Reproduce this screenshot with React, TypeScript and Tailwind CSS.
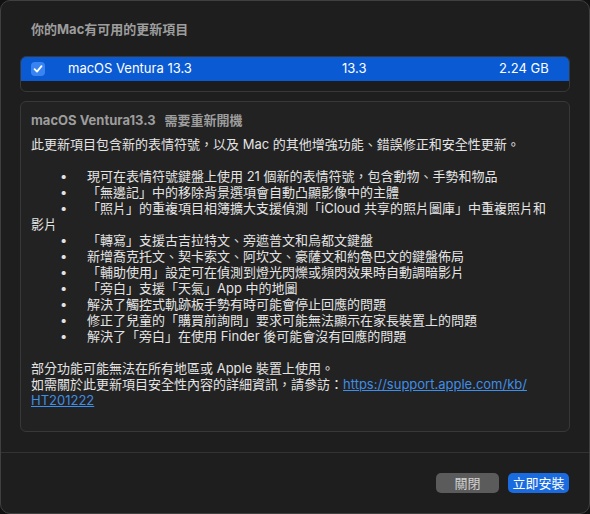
import React from "react";

const bullets: string[] = [
  "現可在表情符號鍵盤上使用 21 個新的表情符號，包含動物、手勢和物品",
  "「無邊記」中的移除背景選項會自動凸顯影像中的主體",
  "「照片」的重複項目相簿擴大支援偵測「iCloud 共享的照片圖庫」中重複照片和",
  "「轉寫」支援古吉拉特文、旁遮普文和烏都文鍵盤",
  "新增喬克托文、契卡索文、阿坎文、豪薩文和約魯巴文的鍵盤佈局",
  "「輔助使用」設定可在偵測到燈光閃爍或頻閃效果時自動調暗影片",
  "「旁白」支援「天氣」App 中的地圖",
  "解決了觸控式軌跡板手勢有時可能會停止回應的問題",
  "修正了兒童的「購買前詢問」要求可能無法顯示在家長裝置上的問題",
  "解決了「旁白」在使用 Finder 後可能會沒有回應的問題",
];

function Bullet({ text }: { text: string }) {
  return (
    <div className="flex h-[16px] whitespace-nowrap">
      <span className="w-[56px] shrink-0 pl-[29px]">•</span>
      <span>{text}</span>
    </div>
  );
}

export default function App() {
  return (
    <div className="w-[590px] h-[514px] bg-[#111111]">
      <div
        className="w-[590px] h-[514px] bg-[#1e1e1e] rounded-[10px] border border-[#404040] flex flex-col px-[19px] text-[13px] text-[#e4e4e4]"
        style={{ fontFamily: '"Inter", "Noto Sans CJK TC", sans-serif' }}
      >
        <div className="h-[55px] pt-[19px] pl-[11px] text-[13px] leading-[18px] font-bold text-[#9d9d9d]">
          你的Mac有可用的更新項目
        </div>

        <div className="h-[36px] rounded-[6px] border border-[#383838] bg-[#1c1c1c] overflow-hidden">
          <div className="h-[24px] bg-[#0a5ad4] flex items-center text-white text-[13px]">
            <div className="w-[14px] h-[14px] ml-[10px] rounded-[4px] bg-[#3a84f2] flex items-center justify-center">
              <svg width="10" height="10" viewBox="0 0 10 10" fill="none">
                <path d="M1.6 5.2 L4 7.6 L8.5 2.2" stroke="white" strokeWidth="1.8" strokeLinecap="round" strokeLinejoin="round" />
              </svg>
            </div>
            <span className="ml-[23px] w-[274px]">macOS Ventura 13.3</span>
            <span className="w-[157px]">13.3</span>
            <span>2.24 GB</span>
          </div>
        </div>

        <div className="mt-[9px] h-[331px] rounded-[6px] border border-[#383838] bg-[#222222] px-[10px] leading-[16px]">
          <div className="pt-[9px] leading-[18px] font-bold text-[#9d9d9d]">
            macOS Ventura13.3<span className="ml-[9px]">需要重新開機</span>
          </div>
          <div className="mt-[7px] whitespace-nowrap">
            此更新項目包含新的表情符號，以及 Mac 的其他增強功能、錯誤修正和安全性更新。
          </div>
          <div className="h-[16px]" />
          <Bullet text={bullets[0]} />
          <Bullet text={bullets[1]} />
          <Bullet text={bullets[2]} />
          <div className="h-[16px]">影片</div>
          {bullets.slice(3).map((b) => (
            <Bullet key={b} text={b} />
          ))}
          <div className="h-[16px]" />
          <div className="whitespace-nowrap">部分功能可能無法在所有地區或 Apple 裝置上使用。</div>
          <div className="whitespace-nowrap">
            如需關於此更新項目安全性內容的詳細資訊，請參訪：
            <span className="text-[#3f8ee8] underline">https://support.apple.com/kb/</span>
          </div>
          <div>
            <span className="text-[#3f8ee8] underline">HT201222</span>
          </div>
        </div>

        <div className="mt-[20px] -mx-[19px] border-t border-[#333333]" />

        <div className="flex justify-end gap-[9px] pt-[20px] pr-[1px]">
          <button className="w-[63px] h-[20px] rounded-[5px] bg-[#5b5b5b] text-[#d2d2d2] text-[13px] leading-[20px]">
            關閉
          </button>
          <button className="w-[61px] h-[20px] rounded-[5px] bg-[#1a6be0] text-white text-[13px] leading-[20px]">
            立即安裝
          </button>
        </div>
      </div>
    </div>
  );
}
